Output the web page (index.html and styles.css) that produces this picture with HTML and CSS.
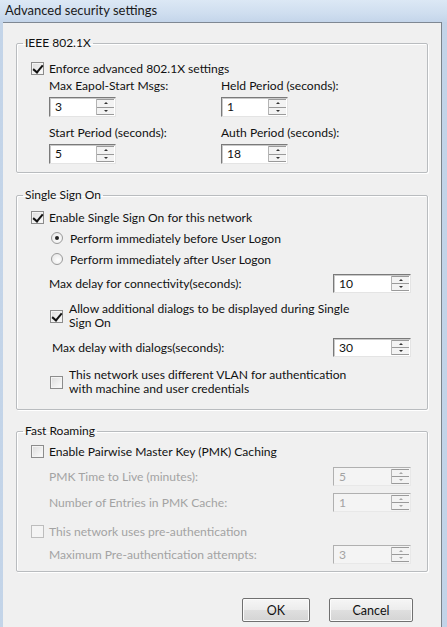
FILE: index.html
```html
<!DOCTYPE html>
<html lang="en">
  <head>
    <meta charset="UTF-8" />
    <title>Advanced security settings</title>
    <link rel="stylesheet" href="styles.css">
  </head>
  <body>
    <div class="window">
      <div class="titlebar">Advanced security settings</div>

      <div class="client">
        <fieldset class="group group-ieee">
          <legend>IEEE 802.1X</legend>
          <div class="row check-row first">
            <span class="check checked"></span>
            <span>Enforce advanced 802.1X settings</span>
          </div>
          <div class="pair-grid">
            <div class="pair">
              <span class="pair-label">Max Eapol-Start Msgs:</span>
              <div class="spin small"><span class="spin-val">3</span><span class="spin-btns"><i class="up"></i><i class="down"></i></span></div>
            </div>
            <div class="pair">
              <span class="pair-label">Held Period (seconds):</span>
              <div class="spin small"><span class="spin-val">1</span><span class="spin-btns"><i class="up"></i><i class="down"></i></span></div>
            </div>
            <div class="pair">
              <span class="pair-label">Start Period (seconds):</span>
              <div class="spin small"><span class="spin-val">5</span><span class="spin-btns"><i class="up"></i><i class="down"></i></span></div>
            </div>
            <div class="pair">
              <span class="pair-label">Auth Period (seconds):</span>
              <div class="spin small"><span class="spin-val">18</span><span class="spin-btns"><i class="up"></i><i class="down"></i></span></div>
            </div>
          </div>
        </fieldset>

        <fieldset class="group group-sso">
          <legend>Single Sign On</legend>
          <div class="row check-row sso-enable">
            <span class="check checked"></span>
            <span>Enable Single Sign On for this network</span>
          </div>
          <div class="row radio-row radio-first">
            <span class="radio selected"></span>
            <span>Perform immediately before User Logon</span>
          </div>
          <div class="row radio-row radio-second">
            <span class="radio"></span>
            <span>Perform immediately after User Logon</span>
          </div>
          <div class="row field-row conn-delay">
            <span class="field-label">Max delay for connectivity(seconds):</span>
            <div class="spin wide"><span class="spin-val">10</span><span class="spin-btns"><i class="up"></i><i class="down"></i></span></div>
          </div>
          <div class="row check-row indent two-line allow-dialogs">
            <span class="check checked"></span>
            <span>Allow additional dialogs to be displayed during Single<br>Sign On</span>
          </div>
          <div class="row field-row dialog-delay">
            <span class="field-label deep">Max delay with dialogs(seconds):</span>
            <div class="spin wide"><span class="spin-val">30</span><span class="spin-btns"><i class="up"></i><i class="down"></i></span></div>
          </div>
          <div class="row check-row indent two-line vlan">
            <span class="check"></span>
            <span>This network uses different VLAN for authentication<br>with machine and user credentials</span>
          </div>
        </fieldset>

        <fieldset class="group group-roam">
          <legend>Fast Roaming</legend>
          <div class="row check-row pmk-enable">
            <span class="check"></span>
            <span>Enable Pairwise Master Key (PMK) Caching</span>
          </div>
          <div class="row field-row disabled pmk-ttl">
            <span class="field-label">PMK Time to Live (minutes):</span>
            <div class="spin wide"><span class="spin-val">5</span><span class="spin-btns"><i class="up"></i><i class="down"></i></span></div>
          </div>
          <div class="row field-row disabled pmk-entries">
            <span class="field-label">Number of Entries in PMK Cache:</span>
            <div class="spin wide"><span class="spin-val">1</span><span class="spin-btns"><i class="up"></i><i class="down"></i></span></div>
          </div>
          <div class="row check-row disabled preauth">
            <span class="check"></span>
            <span>This network uses pre-authentication</span>
          </div>
          <div class="row field-row disabled preauth-max">
            <span class="field-label">Maximum Pre-authentication attempts:</span>
            <div class="spin wide"><span class="spin-val">3</span><span class="spin-btns"><i class="up"></i><i class="down"></i></span></div>
          </div>
        </fieldset>

        <div class="buttons">
          <button class="btn btn-ok">OK</button>
          <button class="btn btn-cancel">Cancel</button>
        </div>
      </div>
    </div>
  </body>
</html>
```

FILE: styles.css
```css
html {
  background: #c9d9ec;
}

body {
  margin: 0px;
  font-family: Lato, "Liberation Sans", sans-serif;
  font-size: 12.1px;
  color: #111;
}

.window {
  width: 447px;
  height: 627px;
  overflow: hidden;
  background: linear-gradient(to right, #c3d4e8, #d8e4f2 30%, #cddcee 70%, #c2d3e8);
}

.titlebar {
  height: 22px;
  padding-left: 5px;
  line-height: 20px;
  font-size: 13px;
  color: #1a1a1a;
  background: linear-gradient(#dce8f5, #cfdeef 60%, #c4d5ea);
}

.client {
  box-sizing: border-box;
  width: 439px;
  height: 605px;
  margin-left: 3px;
  padding: 0px 13px 0px 13px;
  background: #f0f0f0;
  border-top: 1px solid #7f8893;
  border-right: 1px solid #7b828b;
  overflow: hidden;
}

/* group boxes */

.group {
  margin: 0px;
  padding: 0px;
  border: 1px solid #b9bcbf;
  box-shadow: inset 1px 1px #fff, 1px 1px #fff;
  border-radius: 2px;
  min-width: 0px;

  > legend {
    margin-left: 6px;
    padding: 0px 2px;
    height: 14px;
    line-height: 14px;
    font-size: 12px;
  }
}

.group-ieee {
  margin-top: 13px;
  padding-bottom: 8px;
}

.group-sso {
  margin-top: 15px;
  padding-bottom: 13px;
}

.group-roam {
  margin-top: 14px;
  padding-bottom: 7px;
}

/* rows */

.row {
  display: flex;
  align-items: center;
}

.check-row {
  height: 16px;
  padding-left: 14px;
  gap: 5px;
}

.check-row.indent {
  padding-left: 33px;
  gap: 6px;
}

.check-row.two-line {
  height: 28px;
  line-height: 14px;
}

.first { margin-top: 10px; }
.sso-enable { margin-top: 7px; }
.radio-first { margin-top: 5px; }
.radio-second { margin-top: 5px; }
.conn-delay { margin-top: 6px; }
.allow-dialogs { margin-top: 9px; }
.dialog-delay { margin-top: 7px; }
.vlan { margin-top: 11px; }
.pmk-enable { margin-top: 5px; }
.pmk-ttl { margin-top: 7px; }
.pmk-entries { margin-top: 6px; }
.preauth { margin-top: 11px; }
.preauth-max { margin-top: 5px; }

.radio-row {
  height: 16px;
  padding-left: 34px;
  gap: 7px;
}

.field-row {
  height: 20px;
  padding-left: 32px;
  justify-content: space-between;
  padding-right: 16px;
}

.field-label.deep {
  padding-left: 3px;
}

.disabled {
  color: #a3a3a3;
}

/* two-column block in the first group */

.pair-grid {
  margin-top: 2px;
  padding-left: 32px;
  display: grid;
  grid-template-columns: 172px 172px;
  row-gap: 8px;
}

.pair {
  display: flex;
  flex-flow: column;
  align-items: flex-start;
  gap: 3px;

  > .pair-label {
    height: 16px;
    line-height: 16px;
  }
}

/* checkbox and radio */

.check {
  box-sizing: border-box;
  flex: none;
  width: 13px;
  height: 13px;
  border: 1px solid #8c8c8c;
  background: linear-gradient(135deg, #dcdcdc, #fdfdfd);
  box-shadow: inset 0px 0px 0px 1px #f4f4f4;
  position: relative;

  &.checked::after {
    content: "";
    position: absolute;
    left: 3px;
    top: 0px;
    width: 4px;
    height: 8px;
    border: solid #111;
    border-width: 0px 2px 2px 0px;
    transform: rotate(40deg);
  }
}

.disabled .check {
  border-color: #bdbdbd;
  background: #f4f4f4;
}

.radio {
  box-sizing: border-box;
  flex: none;
  width: 12px;
  height: 12px;
  border: 1px solid #9a9a9a;
  border-radius: 50%;
  background: radial-gradient(circle at 60% 60%, #fff, #e2e2e2);
  display: flex;
  align-items: center;
  justify-content: center;

  &.selected::after {
    content: "";
    width: 4px;
    height: 4px;
    border-radius: 50%;
    background: #222;
  }
}

/* spin boxes */

.spin {
  box-sizing: border-box;
  display: flex;
  height: 20px;
  background: #fff;
  border: 1px solid;
  border-color: #7a7a7a #e4e4e4 #e4e4e4 #7a7a7a;
  box-shadow: inset 1px 1px #c9c9c9;

  &.small { width: 67px; }
  &.wide { width: 78px; height: 19px; }
}

.spin-val {
  flex: 1;
  padding-left: 5px;
  line-height: 17px;
}

.spin-btns {
  width: 17px;
  margin: 1px 1px 1px 0px;
  display: flex;
  flex-flow: column;
  border-left: 1px solid #b4b4b4;

  > i {
    flex: 1;
    display: flex;
    align-items: center;
    justify-content: center;
    background: #f3f3f3;
    border-top: 1px solid #9a9a9a;
  }

  > i:last-child {
    border-bottom: 1px solid #9a9a9a;
  }

  > .up::after {
    content: "";
    border: 2px solid transparent;
    border-bottom: 2px solid #333;
    border-top: 0px;
  }

  > .down::after {
    content: "";
    border: 2px solid transparent;
    border-top: 2px solid #333;
    border-bottom: 0px;
  }
}

.disabled .spin {
  background: #f4f4f4;
  border-color: #b0b0b0 #e8e8e8 #e8e8e8 #b0b0b0;
  box-shadow: none;

  .spin-btns > i::after {
    opacity: 0.4;
  }
}

/* buttons */

.buttons {
  margin-top: 26px;
  padding-right: 15px;
  display: flex;
  justify-content: flex-end;
  gap: 19px;
}

.btn {
  height: 24px;
  font-family: inherit;
  font-size: 12.5px;
  color: #111;
  border: 1px solid #707070;
  border-radius: 2px;
  background: linear-gradient(#f6f6f6, #ececec 50%, #dfdfdf 50%, #d4d4d4);
  box-shadow: inset 0px 0px 0px 1px #fbfbfb;

  &.btn-ok { width: 68px; }
  &.btn-cancel { width: 84px; }
}
```
